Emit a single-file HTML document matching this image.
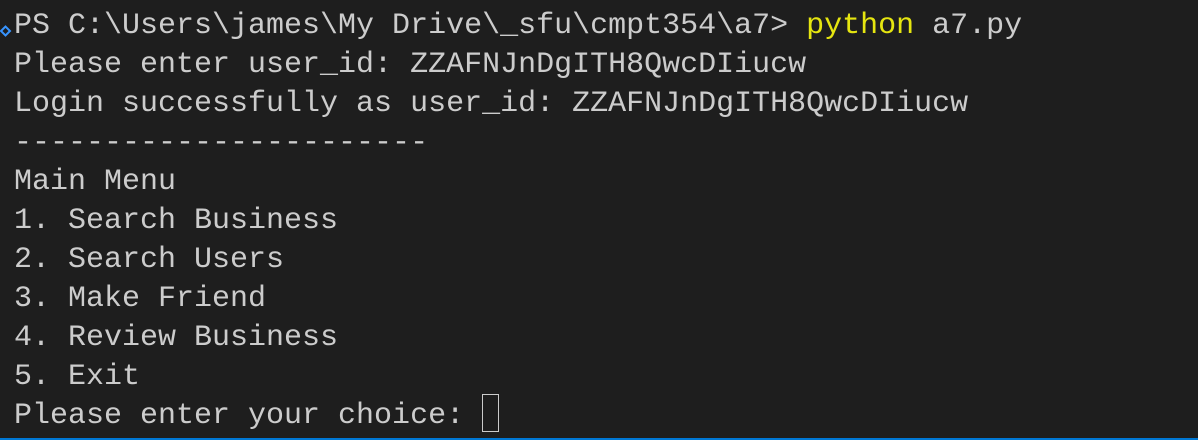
<!DOCTYPE html>
<html><head><meta charset="utf-8"><style>
html,body{margin:0;padding:0;}
body{width:1198px;height:440px;background:#1e1e1e;overflow:hidden;position:relative;font-family:"Liberation Mono",monospace;font-size:30px;color:#cccccc;}
.l{position:absolute;left:14px;height:39px;line-height:39px;white-space:pre;}
.y{color:#e5e510;}
.cur{position:absolute;left:482px;top:394px;width:15px;height:36px;border:1.5px solid #cccccc;}
.bar{position:absolute;left:0;right:0;bottom:0;height:2px;background:#0078d4;}
</style></head><body>
<svg style="position:absolute;left:0;top:24px" width="12" height="14" viewBox="0 0 12 14"><path d="M1 7 L5.5 2.5 L10 7 L5.5 11.5 Z" fill="none" stroke="#3794ff" stroke-width="2"/></svg>
<div class="l" style="top:7px">PS C:\Users\james\My Drive\_sfu\cmpt354\a7> <span class="y">python</span> a7.py</div>
<div class="l" style="top:46px">Please enter user_id: ZZAFNJnDgITH8QwcDIiucw</div>
<div class="l" style="top:85px">Login successfully as user_id: ZZAFNJnDgITH8QwcDIiucw</div>
<div class="l" style="top:124px">-----------------------</div>
<div class="l" style="top:163px">Main Menu</div>
<div class="l" style="top:202px">1. Search Business</div>
<div class="l" style="top:241px">2. Search Users</div>
<div class="l" style="top:280px">3. Make Friend</div>
<div class="l" style="top:319px">4. Review Business</div>
<div class="l" style="top:358px">5. Exit</div>
<div class="l" style="top:397px">Please enter your choice: </div>
<div class="cur"></div>
<div class="bar"></div>
</body></html>
